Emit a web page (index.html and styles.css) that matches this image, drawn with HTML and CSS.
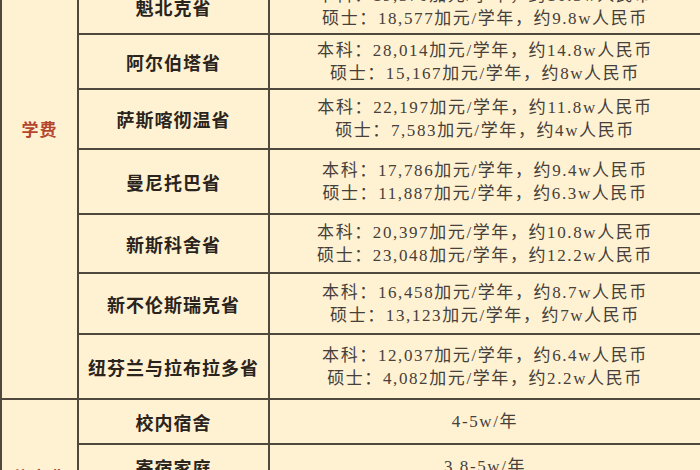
FILE: index.html
```html
<!DOCTYPE html>
<html lang="zh-CN">
<head>
<meta charset="utf-8">
<title>加拿大各省学费</title>
<link rel="stylesheet" href="styles.css">
</head>
<body>
<div class="viewport">
<table class="fees">
  <colgroup>
    <col class="c-cat">
    <col class="c-prov">
    <col class="c-val">
  </colgroup>
  <tbody>
    <tr class="r-a">
      <td class="cat cat-fee" rowspan="7">学费</td>
      <td class="prov">魁北克省</td>
      <td class="val">本科：19,370加元/学年，约10.3w人民币<br>硕士：18,577加元/学年，约9.8w人民币</td>
    </tr>
    <tr class="r-b">
      <td class="prov">阿尔伯塔省</td>
      <td class="val">本科：28,014加元/学年，约14.8w人民币<br>硕士：15,167加元/学年，约8w人民币</td>
    </tr>
    <tr class="r-c">
      <td class="prov">萨斯喀彻温省</td>
      <td class="val">本科：22,197加元/学年，约11.8w人民币<br>硕士：7,583加元/学年，约4w人民币</td>
    </tr>
    <tr class="r-d">
      <td class="prov">曼尼托巴省</td>
      <td class="val">本科：17,786加元/学年，约9.4w人民币<br>硕士：11,887加元/学年，约6.3w人民币</td>
    </tr>
    <tr class="r-e">
      <td class="prov">新斯科舍省</td>
      <td class="val">本科：20,397加元/学年，约10.8w人民币<br>硕士：23,048加元/学年，约12.2w人民币</td>
    </tr>
    <tr class="r-f">
      <td class="prov">新不伦斯瑞克省</td>
      <td class="val">本科：16,458加元/学年，约8.7w人民币<br>硕士：13,123加元/学年，约7w人民币</td>
    </tr>
    <tr class="r-g">
      <td class="prov">纽芬兰与拉布拉多省</td>
      <td class="val">本科：12,037加元/学年，约6.4w人民币<br>硕士：4,082加元/学年，约2.2w人民币</td>
    </tr>
    <tr class="r-h">
      <td class="cat cat-live" rowspan="3">住宿费</td>
      <td class="prov">校内宿舍</td>
      <td class="val">4-5w/年</td>
    </tr>
    <tr class="r-i">
      <td class="prov">寄宿家庭</td>
      <td class="val">3.8-5w/年</td>
    </tr>
    <tr class="r-j">
      <td class="prov">校外租房</td>
      <td class="val">3-5w/年</td>
    </tr>
  </tbody>
</table>
</div>
</body>
</html>
```

FILE: styles.css
```css
html, body {
  margin: 0;
  padding: 0;
  background: #fff2d3;
}

.viewport {
  width: 700px;
  height: 470px;
  overflow: hidden;
  background: #fff2d3;
}

.fees {
  width: 700px;
  margin-top: -22px;
  border-collapse: collapse;
  table-layout: fixed;
  background: #fff2d3;
}

.c-cat { width: 77px; }
.c-prov { width: 191px; }
.c-val { width: 432px; }

.fees td {
  border: 2px solid #4f483c;
  padding: 0;
  text-align: center;
  vertical-align: middle;
}

.cat {
  vertical-align: top !important;
  font-family: "Noto Sans CJK SC", sans-serif;
  font-weight: 700;
  font-size: 17px;
  line-height: 20px;
  color: #b4462e;
  letter-spacing: 1px;
}

.cat-fee { padding-top: 139px !important; }
.cat-live { padding-top: 67px !important; }

.prov {
  font-family: "Noto Sans CJK SC", sans-serif;
  font-weight: 700;
  font-size: 18px;
  letter-spacing: 1px;
  color: #2a241c;
  line-height: 22px;
}

.val {
  font-family: "Liberation Serif", "Noto Sans CJK SC", serif;
  font-size: 17px;
  line-height: 23px;
  letter-spacing: 1.6px;
  color: #46403a;
}

.r-a { height: 55px; }
.r-b { height: 55px; }
.r-c { height: 60px; }
.r-d { height: 65px; }
.r-e { height: 59px; }
.r-f { height: 61px; }
.r-g { height: 65px; }
.r-h { height: 45px; }
.r-i { height: 45px; }
.r-j { height: 45px; }
```
